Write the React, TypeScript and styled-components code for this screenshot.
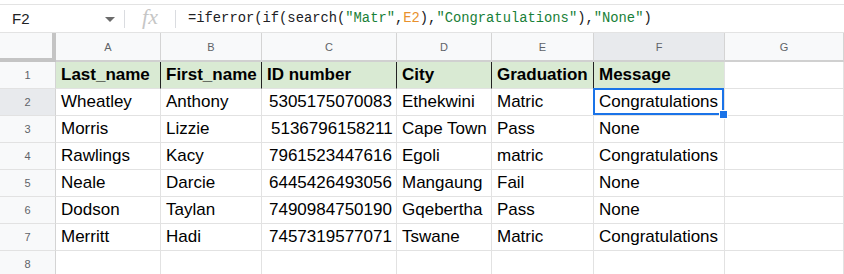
import styled, { createGlobalStyle, css } from "styled-components";

const GlobalStyle = createGlobalStyle`
  html, body {
    margin: 0;
    padding: 0;
    background: #ffffff;
  }
  body {
    font-family: "Liberation Sans", Arial, sans-serif;
    overflow: hidden;
  }
`;

const columns = ["A", "B", "C", "D", "E", "F", "G"];
const headers = ["Last_name", "First_name", "ID number", "City", "Graduation", "Message"];

const rows = [
  ["Wheatley", "Anthony", "5305175070083", "Ethekwini", "Matric", "Congratulations"],
  ["Morris", "Lizzie", "5136796158211", "Cape Town", "Pass", "None"],
  ["Rawlings", "Kacy", "7961523447616", "Egoli", "matric", "Congratulations"],
  ["Neale", "Darcie", "6445426493056", "Mangaung", "Fail", "None"],
  ["Dodson", "Taylan", "7490984750190", "Gqebertha", "Pass", "None"],
  ["Merritt", "Hadi", "7457319577071", "Tswane", "Matric", "Congratulations"],
];

export default function App() {
  return (
    <>
      <GlobalStyle />
      <Sheet>
        <FormulaBar>
          <NameBox>
            F2
            <Caret />
          </NameBox>
          <Divider />
          <Fx>fx</Fx>
          <Divider />
          <Formula>
            =iferror(if(search(<Str>"Matr"</Str>,<Ref>E2</Ref>),<Str>"Congratulations"</Str>),<Str>"None"</Str>)
          </Formula>
        </FormulaBar>

        <Grid>
          <Corner />
          {columns.map((c) => (
            <ColHeader key={c} $selected={c === "F"}>
              {c}
            </ColHeader>
          ))}

          <RowHeader>1</RowHeader>
          {headers.map((h, i) => (
            <Cell key={h} $head $divider={i < headers.length - 1}>
              {h}
            </Cell>
          ))}
          <Cell />

          {rows.map((r, ri) => (
            <Row key={ri} index={ri + 2} values={r} />
          ))}

          <RowHeader>8</RowHeader>
          {columns.map((c) => (
            <Cell key={c} />
          ))}
        </Grid>
      </Sheet>
    </>
  );
}

function Row({ index, values }: { index: number; values: string[] }) {
  return (
    <>
      <RowHeader $selected={index === 2}>{index}</RowHeader>
      {values.map((v, i) => (
        <Cell key={i} $active={index === 2 && i === 5} $indent={i === 2 ? (index === 3 ? 9 : 7) : 5}>
          {v}
        </Cell>
      ))}
      <Cell />
    </>
  );
}

const Sheet = styled.div`
  width: 844px;
  height: 274px;
  overflow: hidden;
  background: #fff;
`;

const FormulaBar = styled.div`
  margin-top: 4px;
  height: 27px;
  display: flex;
  align-items: center;
  border-top: 1px solid #e3e3e3;
  border-bottom: 1px solid #e3e3e3;
`;

const NameBox = styled.div`
  width: 124px;
  box-sizing: border-box;
  padding: 0 9px 0 12px;
  display: flex;
  align-items: center;
  justify-content: space-between;
  font-size: 15px;
  color: #202124;
`;

const Caret = styled.span`
  width: 0;
  height: 0;
  border-left: 5px solid transparent;
  border-right: 5px solid transparent;
  border-top: 5px solid #6b6b6b;
  margin-top: 2px;
`;

const Divider = styled.div`
  width: 1px;
  height: 18px;
  background: #dadce0;
`;

const Fx = styled.div`
  width: 50px;
  text-align: center;
  font-family: "Liberation Serif", "DejaVu Serif", serif;
  font-style: italic;
  font-size: 22px;
  color: #c6c6c6;
  margin-top: -3px;
`;

const Formula = styled.div`
  padding-left: 12px;
  font-family: "Liberation Mono", "DejaVu Sans Mono", monospace;
  font-size: 13.8px;
  color: #202124;
  white-space: nowrap;
`;

const Str = styled.span`
  color: #188038;
`;

const Ref = styled.span`
  color: #e8912d;
`;

const Grid = styled.div`
  display: grid;
  grid-template-columns: 56px 105px 101px 135px 95px 102px 131px 1fr;
  grid-template-rows: 29px;
  grid-auto-rows: 27px;
`;

const headerText = css`
  display: flex;
  align-items: center;
  justify-content: center;
  box-sizing: border-box;
  font-family: "Liberation Sans", Arial, sans-serif;
  font-size: 11px;
  color: #5f6368;
`;

const Corner = styled.div`
  box-sizing: border-box;
  background: #f8f9fa;
  border-right: 4px solid #c4c4c4;
  border-bottom: 4px solid #c4c4c4;
`;

const ColHeader = styled.div<{ $selected?: boolean }>`
  ${headerText};
  background: ${(p) => (p.$selected ? "#e8eaed" : "#f8f9fa")};
  border-right: 1px solid #d4d4d4;
  border-bottom: 2px solid #d0d0d0;
`;

const RowHeader = styled.div<{ $selected?: boolean }>`
  ${headerText};
  background: ${(p) => (p.$selected ? "#e8eaed" : "#f8f9fa")};
  border-right: 1px solid #d4d4d4;
  border-bottom: 1px solid #e2e2e2;
`;

const Cell = styled.div<{ $head?: boolean; $divider?: boolean; $active?: boolean; $indent?: number }>`
  position: relative;
  box-sizing: border-box;
  display: flex;
  align-items: center;
  padding-left: ${(p) => p.$indent ?? 5}px;
  white-space: nowrap;
  font-size: 17px;
  color: #000;
  border-right: 1px solid ${(p) => (p.$divider ? "#222" : "#e2e2e2")};
  border-bottom: 1px solid #e2e2e2;
  ${(p) =>
    p.$head &&
    css`
      background: #d9ead3;
      font-weight: bold;
    `}
  ${(p) =>
    p.$active &&
    css`
      &::after {
        content: "";
        position: absolute;
        left: -1px;
        top: -1px;
        right: 0;
        bottom: 0;
        border: 2px solid #1a73e8;
      }
      &::before {
        content: "";
        position: absolute;
        right: -4px;
        bottom: -4px;
        width: 7px;
        height: 7px;
        background: #1a73e8;
        border: 1px solid #fff;
        z-index: 2;
      }
    `}
`;
